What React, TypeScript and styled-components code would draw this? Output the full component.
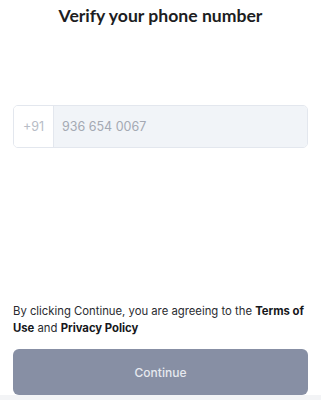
import React from "react";
import styled, { createGlobalStyle } from "styled-components";

const GlobalStyle = createGlobalStyle`
  html, body {
    margin: 0;
    padding: 0;
    background: #ffffff;
    font-family: "Inter", "Noto Sans", sans-serif;
  }
`;

const App: React.FunctionComponent = () => {
  return (
    <>
      <GlobalStyle />
      <Screen>
        <Title>Verify your phone number</Title>
        <PhoneField>
          <Prefix>+91</Prefix>
          <NumberInput defaultValue="" placeholder="936 654 0067" />
        </PhoneField>
        <Spacer />
        <Terms>
          By clicking Continue, you are agreeing to the <b>Terms of Use</b> and{" "}
          <b>Privacy Policy</b>
        </Terms>
        <ContinueButton disabled>Continue</ContinueButton>
        <BottomStrip />
      </Screen>
    </>
  );
};

const Screen = styled.div`
  width: 321px;
  height: 400px;
  display: flex;
  flex-direction: column;
  box-sizing: border-box;
  padding: 0 13px;
  overflow: hidden;
`;

const Title = styled.h1`
  margin: 5px 0 0;
  font-family: "Lato", "Inter", sans-serif;
  font-size: 17.6px;
  font-weight: 700;
  line-height: 22px;
  text-align: center;
  color: #1c1d22;
`;

const PhoneField = styled.div`
  margin-top: 78px;
  height: 43px;
  display: flex;
  border: 1px solid #e3e7ee;
  border-radius: 5px;
  overflow: hidden;
  box-sizing: border-box;
`;

const Prefix = styled.div`
  width: 39px;
  display: flex;
  align-items: center;
  justify-content: center;
  font-size: 12.5px;
  color: #b7bcc6;
  background: #ffffff;
  border-right: 1px solid #e3e7ee;
`;

const NumberInput = styled.input`
  flex: 1;
  border: none;
  outline: none;
  background: #f1f4f8;
  padding: 0 0 0 8px;
  font-family: inherit;
  font-size: 12.5px;
  color: #333;
  &::placeholder {
    color: #a4a9b3;
  }
`;

const Spacer = styled.div`
  flex: 1;
`;

const Terms = styled.p`
  margin: 0 0 12px;
  font-size: 11.3px;
  line-height: 17px;
  color: #2a2b30;
  b {
    font-weight: 700;
    color: #16171b;
  }
`;

const ContinueButton = styled.button`
  height: 46px;
  width: 100%;
  border: none;
  border-radius: 6px;
  background: #878fa4;
  color: #e6e9ef;
  font-family: inherit;
  font-size: 12px;
  font-weight: 500;
`;

const BottomStrip = styled.div`
  height: 5px;
  margin: 0 -13px;
  background: #f3f4f6;
  flex-shrink: 0;
`;

export default App;
